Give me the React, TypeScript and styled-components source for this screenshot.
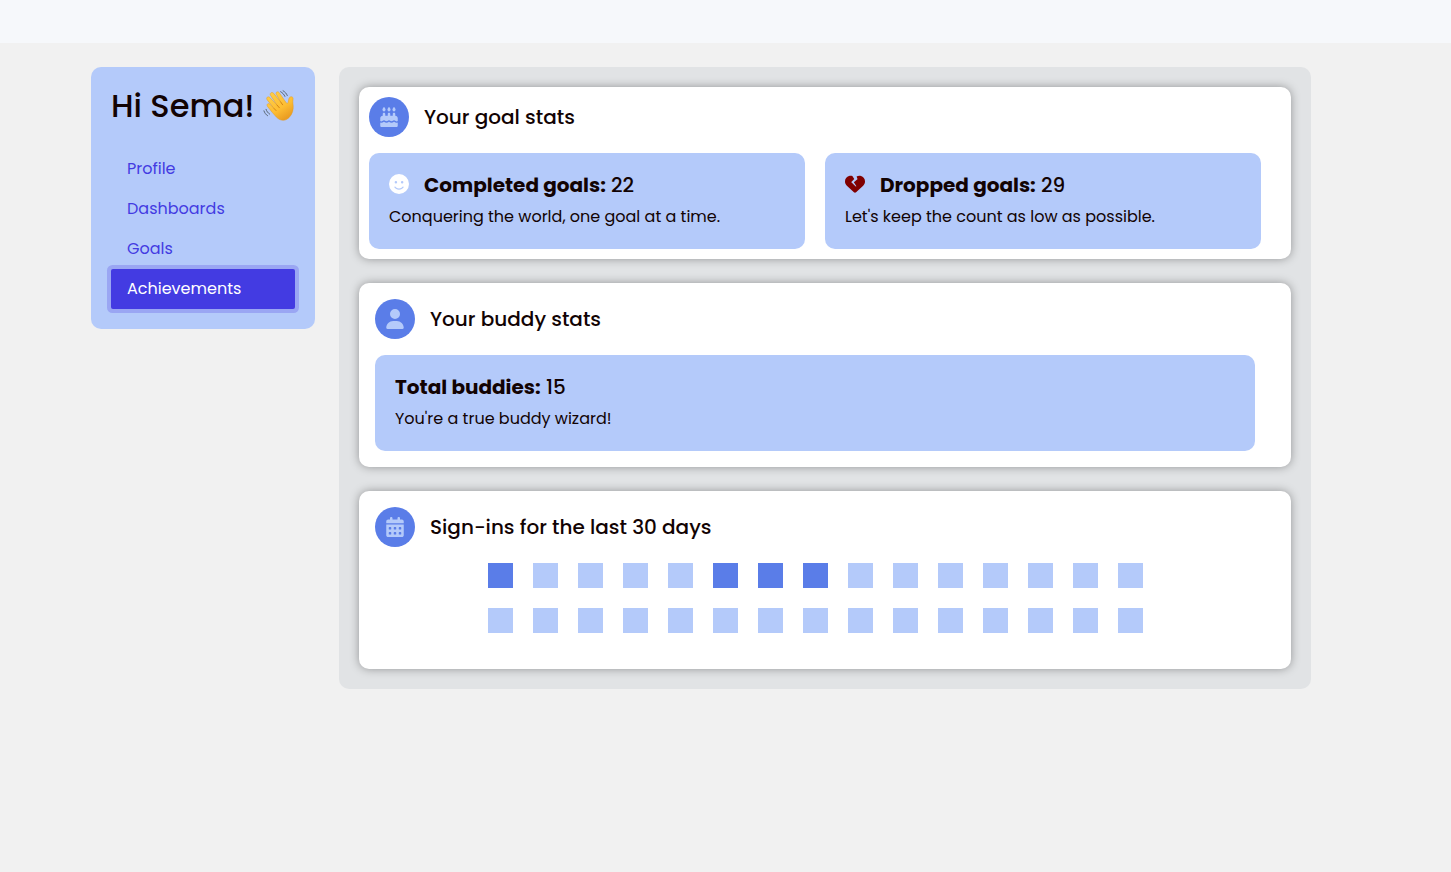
import React from "react";
import styled, { createGlobalStyle } from "styled-components";
import {
  FaCakeCandles,
  FaFaceSmile,
  FaHeartCrack,
  FaUser,
  FaCalendarDays,
} from "react-icons/fa6";

const GlobalStyle = createGlobalStyle`
  *, *::before, *::after { box-sizing: border-box; }
  body {
    margin: 0;
    background: #f1f1f1;
    color: #120303;
    font-family: Poppins, Inter, "Liberation Sans", sans-serif;
    font-size: 16px;
    line-height: 24px;
  }
  h1, h2, h3, p, ul { margin: 0; padding: 0; }
`;

const TopBar = styled.header`
  height: 43px;
  background: #f6f8fb;
`;

const Layout = styled.div`
  display: flex;
  align-items: flex-start;
  gap: 24px;
  padding: 24px 140px 24px 91px;
`;

const Sidebar = styled.aside`
  flex: 0 0 224px;
  min-width: 0;
  padding: 20px;
  border-radius: 10px;
  background: #b4cafa;
`;

const Greeting = styled.h1`
  display: flex;
  align-items: center;
  gap: 8px;
  margin-bottom: 24px;
  font-size: 32px;
  line-height: 38px;
  font-weight: 500;
  white-space: nowrap;
`;

const NavList = styled.ul`
  list-style: none;
`;

const NavLink = styled.a<{ $active?: boolean }>`
  display: block;
  padding: 8px 16px;
  border-radius: 2px;
  text-decoration: none;
  color: ${(p) => (p.$active ? "#fff" : "#433be2")};
  background: ${(p) => (p.$active ? "#433be2" : "transparent")};
  box-shadow: ${(p) => (p.$active ? "0 0 0 4px #9aa6f3" : "none")};
`;

const Main = styled.main`
  flex: 1;
  min-width: 0;
  display: flex;
  flex-direction: column;
  gap: 24px;
  padding: 20px;
  border-radius: 10px;
  background: #e1e3e5;
`;

const Card = styled.section<{ $compact?: boolean }>`
  padding: ${(p) => (p.$compact ? "10px 30px 10px 10px" : "16px 36px 16px 16px")};
  border-radius: 10px;
  background: #fff;
  box-shadow: 0 0 10px rgba(0, 0, 0, 0.35);
`;

const CardHead = styled.div`
  display: flex;
  align-items: center;
  gap: 15px;
  margin-bottom: 16px;
`;

const CardTitle = styled.h2`
  font-size: 20px;
  line-height: 24px;
  font-weight: 500;
`;

const IconDisc = styled.span`
  display: flex;
  align-items: center;
  justify-content: center;
  width: 40px;
  height: 40px;
  border-radius: 50%;
  background: #5a7de8;
  color: #b4cafa;
  font-size: 20px;
`;

const StatRow = styled.div`
  display: flex;
  gap: 20px;
`;

const Stat = styled.div`
  flex: 1;
  padding: 20px;
  border-radius: 10px;
  background: #b4cafa;
`;

const StatTitle = styled.h3`
  display: flex;
  align-items: center;
  gap: 15px;
  margin-bottom: 8px;
  font-size: 20px;
  line-height: 24px;
  font-weight: 500;

  strong { font-weight: 700; }
`;

const StatIcon = styled.span<{ $color: string }>`
  display: flex;
  padding-bottom: 2px;
  color: ${(p) => p.$color};
`;

const DayGrid = styled.div`
  display: grid;
  grid-template-columns: repeat(15, 25px);
  justify-content: center;
  gap: 20px;
  padding-bottom: 20px;
`;

const Day = styled.span<{ $signedIn: boolean }>`
  height: 25px;
  background: ${(p) => (p.$signedIn ? "#5a7de8" : "#b4cafa")};
`;

const WavingHand = () => (
  <svg width="34" height="34" viewBox="0 0 34 34" role="img" aria-label="Waving hand">
    <defs>
      <linearGradient id="skin" x1="0" y1="0" x2="0.6" y2="1">
        <stop offset="0" stopColor="#ffd04a" />
        <stop offset="0.65" stopColor="#fdbe33" />
        <stop offset="1" stopColor="#ea9d22" />
      </linearGradient>
    </defs>
    <path
      d="M9.6 23.6 L4.7 17.4 C3.2 15.4 5.5 13.4 7.2 15.1 L11.8 19.8 L4.4 10.6 C2.7 8.4 5.4 6.1 7.3 8.2 L14.8 16.1 L8 6 C6.4 3.6 9.4 1.6 11.2 3.7 L18.6 12.8 L14 4.8 C12.7 2.5 15.5 1 17 3 L24.4 13.6 C25.2 14.7 26.3 14.2 26.5 12.8 C26.8 10.8 27.1 7.4 29.3 7.2 C31.4 7 31.9 8.6 31.5 10.4 C30.9 13.2 32 16 31.7 19.6 C31.4 24.2 28.6 29.2 24.6 31.2 C20.8 33.1 17.1 31.6 14.2 28.8 Z"
      fill="url(#skin)"
      stroke="#e29a22"
      strokeWidth="0.5"
    />
    <path
      d="M11.8 19.8 L13.7 21.8 M14.8 16.1 L17.2 18.9 M18.6 12.8 L20.6 15.7"
      fill="none"
      stroke="#d28113"
      strokeWidth="1"
      strokeLinecap="round"
    />
    <path
      d="M18.5 2 C20.6 3.1 22 4.7 23 6.9 M21.1 1 C23.2 2.2 24.6 3.8 25.5 6 M1 22.1 C1.7 24.3 2.9 26 4.8 27.2 M3.2 20.5 C3.9 22.7 5.2 24.3 7 25.5"
      fill="none"
      stroke="#55626d"
      strokeWidth="1"
      strokeLinecap="round"
    />
  </svg>
);

const links = ["Profile", "Dashboards", "Goals", "Achievements"];
const signedInDays = [0, 5, 6, 7];

export default function App() {
  return (
    <>
      <GlobalStyle />
      <TopBar />
      <Layout>
        <Sidebar>
          <Greeting>
            Hi Sema! <WavingHand />
          </Greeting>
          <nav>
            <NavList>
              {links.map((label) => (
                <li key={label}>
                  <NavLink
                    href={`#${label.toLowerCase()}`}
                    $active={label === "Achievements"}
                    aria-current={label === "Achievements" ? "page" : undefined}
                  >
                    {label}
                  </NavLink>
                </li>
              ))}
            </NavList>
          </nav>
        </Sidebar>

        <Main>
          <Card $compact>
            <CardHead>
              <IconDisc><FaCakeCandles /></IconDisc>
              <CardTitle>Your goal stats</CardTitle>
            </CardHead>
            <StatRow>
              <Stat>
                <StatTitle>
                  <StatIcon $color="#fff"><FaFaceSmile /></StatIcon>
                  <span><strong>Completed goals:</strong> 22</span>
                </StatTitle>
                <p>Conquering the world, one goal at a time.</p>
              </Stat>
              <Stat>
                <StatTitle>
                  <StatIcon $color="#800000"><FaHeartCrack /></StatIcon>
                  <span><strong>Dropped goals:</strong> 29</span>
                </StatTitle>
                <p>Let's keep the count as low as possible.</p>
              </Stat>
            </StatRow>
          </Card>

          <Card>
            <CardHead>
              <IconDisc><FaUser /></IconDisc>
              <CardTitle>Your buddy stats</CardTitle>
            </CardHead>
            <Stat>
              <StatTitle>
                <span><strong>Total buddies:</strong> 15</span>
              </StatTitle>
              <p>You're a true buddy wizard!</p>
            </Stat>
          </Card>

          <Card>
            <CardHead>
              <IconDisc><FaCalendarDays /></IconDisc>
              <CardTitle>Sign-ins for the last 30 days</CardTitle>
            </CardHead>
            <DayGrid>
              {Array.from({ length: 30 }, (_, i) => (
                <Day key={i} $signedIn={signedInDays.includes(i)} />
              ))}
            </DayGrid>
          </Card>
        </Main>
      </Layout>
    </>
  );
}
